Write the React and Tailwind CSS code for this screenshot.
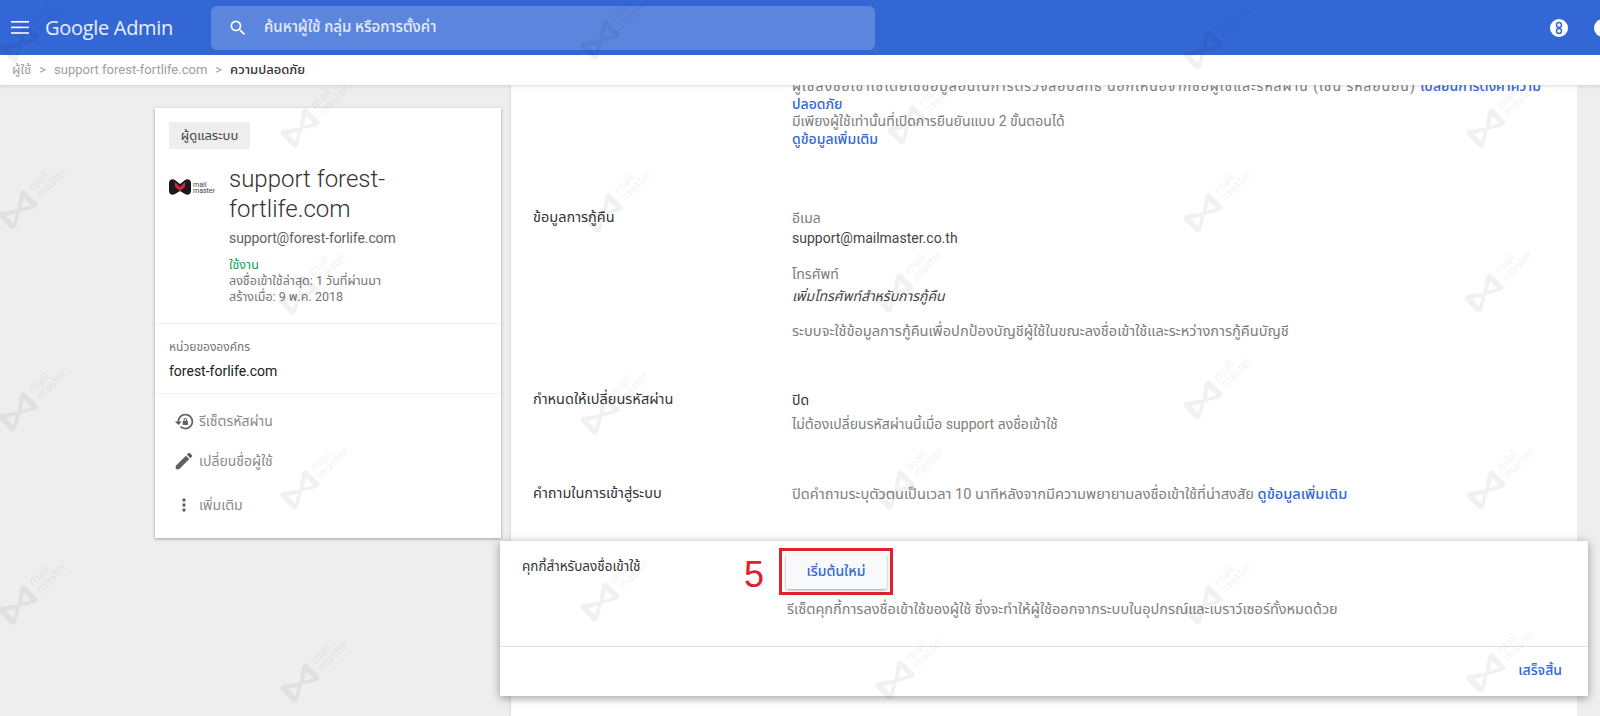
const marks = [
  [20,43],[18,210],[18,412],[18,605],
  [300,128],[298,295],[300,490],[300,683],
  [600,40],[603,213],[600,415],[600,602],
  [907,125],[894,293],[895,490],[895,680],
  [1203,50],[1203,213],[1203,400],[1203,605],
  [1486,128],[1484,293],[1486,490],[1486,673],
];

function Watermark({ x, y }) {
  return (
    <svg className="absolute blur-[0.6px]" style={{ left: x - 60, top: y - 60 }} width="120" height="120" viewBox="-60 -60 120 120">
      <g transform="rotate(-45)" fill="#000" fillOpacity="0.055">
        <path transform="translate(-21 -12.5) scale(0.84)" fillRule="evenodd" d="M3 6C3 2 7 1 10 3L25 14 40 3C43 1 47 2 47 6V24C47 28 43 29 40 27L25 18 10 27C7 29 3 28 3 24ZM10 10V22L20 16ZM40 10 30 16 40 22Z" />
        <text x="24" y="-2" fontFamily="Roboto, sans-serif" fontSize="12">mail</text>
        <text x="24" y="8" fontFamily="Roboto, sans-serif" fontSize="12">master</text>
      </g>
    </svg>
  );
}

function Row({ label, children, className }) {
  return (
    <div className={"grid grid-cols-[259px_1fr] pl-[22px] " + className}>
      <div className="text-[14.5px] leading-[18px] text-[#333]">{label}</div>
      <div className="text-[14px] leading-[18px] text-[#7d7d7d]">{children}</div>
    </div>
  );
}

function Action({ icon, children, className }) {
  return (
    <div className={"flex items-center h-[20px] " + className}>
      <div className="w-[30px] flex justify-center text-[#616161]">{icon}</div>
      <span className="text-[14px] text-[#8a8a8a]">{children}</span>
    </div>
  );
}

export default function App() {
  return (
    <div className="relative h-[716px] w-[1600px] overflow-hidden bg-[#eeeeee] flex flex-col font-['Roboto','Noto_Sans_Thai','Noto_Sans',sans-serif]">
      <header className="h-[55px] shrink-0 bg-[#3367d6] flex items-center pl-[11px] z-20 relative">
        <svg width="18" height="13" viewBox="0 0 18 13" fill="#fff"><rect width="18" height="1.6" /><rect y="5.6" width="18" height="1.6" /><rect y="11.2" width="18" height="1.6" /></svg>
        <span className="ml-[16px] w-[166px] text-[20px] text-white/90 font-['Open_Sans',sans-serif] tracking-[-0.3px]">Google Admin</span>
        <div className="w-[664px] h-[44px] rounded-[6px] bg-[#5c85de] flex items-center pl-[17px]">
          <svg width="20" height="20" viewBox="0 0 24 24" fill="#fff"><path d="M15.5 14h-.79l-.28-.27A6.47 6.47 0 0 0 16 9.5 6.5 6.5 0 1 0 9.5 16c1.61 0 3.09-.59 4.23-1.57l.27.28v.79l5 4.99L20.49 19l-4.99-5zm-6 0C7.01 14 5 11.99 5 9.5S7.01 5 9.5 5 14 7.01 14 9.5 11.99 14 9.5 14z" /></svg>
          <span className="ml-[16px] text-[15px] font-medium text-white/85">ค้นหาผู้ใช้ กลุ่ม หรือการตั้งค่า</span>
        </div>
        <div className="ml-auto flex items-center gap-[26px] -mr-[12px]">
          <svg width="18" height="18" viewBox="0 0 18 18"><circle cx="9" cy="9" r="9" fill="#fff" /><circle cx="9" cy="6" r="2.5" fill="none" stroke="#3367d6" strokeWidth="1.4" /><circle cx="9" cy="12" r="2.5" fill="none" stroke="#3367d6" strokeWidth="1.4" /></svg>
          <div className="w-[18px] h-[18px] rounded-full bg-white" />
        </div>
      </header>

      <nav className="h-[30px] shrink-0 bg-white flex items-center pl-[12px] gap-[8px] text-[13px] text-[#9e9e9e] shadow-[0_1px_4px_rgba(0,0,0,0.14)] z-10 relative">
        <span>ผู้ใช้</span><span>&gt;</span><span>support forest-fortlife.com</span><span>&gt;</span><span className="font-medium text-[#333]">ความปลอดภัย</span>
      </nav>

      <main className="flex-1 min-h-0 flex pl-[155px] pr-[23px] gap-[10px]">
        <aside className="w-[346px] h-[430px] mt-[23px] shrink-0 bg-white shadow-[0_1px_3px_rgba(0,0,0,0.35)] flex flex-col">
          <div className="px-[14px] pt-[14px] h-[216px] border-b border-[#f1f1f1]">
            <div className="w-[81px] h-[27px] bg-[#eeeeee] flex items-center justify-center text-[13px] text-[#444]">ผู้ดูแลระบบ</div>
            <div className="flex mt-[15px]">
              <div className="w-[60px] shrink-0 pt-[14px] flex items-start">
                <svg width="46" height="18" viewBox="0 0 46 18">
                  <path d="M0 5c0-3 3-5 6-3l5 4 5-4c3-2 6 0 6 3v8c0 3-3 5-6 3l-5-3-5 3c-3 2-6 0-6-3z" fill="#1a1a1a" />
                  <path d="M6 4l5 5 5-5v5l-5 4-5-4z" fill="#d3263a" />
                  <text x="24" y="9" fontSize="7" fontFamily="Roboto, sans-serif" fill="#444">mail</text>
                  <text x="24" y="15" fontSize="7" fontFamily="Roboto, sans-serif" fill="#444">master</text>
                </svg>
              </div>
              <div className="min-w-0">
                <div className="text-[24px] leading-[30px] text-[#333] font-light">support forest-<br />fortlife.com</div>
                <div className="mt-[4px] text-[14px] leading-[20px] text-[#616161] tracking-[-0.1px]">support@forest-forlife.com</div>
                <div className="mt-[9px] text-[12.5px] leading-[16px] text-[#0f9d58]">ใช้งาน</div>
                <div className="text-[12.5px] leading-[16px] text-[#757575]">ลงชื่อเข้าใช้ล่าสุด: 1 วันที่ผ่านมา</div>
                <div className="text-[12.5px] leading-[16px] text-[#757575]">สร้างเมื่อ: 9 พ.ค. 2018</div>
              </div>
            </div>
          </div>
          <div className="px-[14px] pt-[14px] h-[70px] border-b border-[#f1f1f1]">
            <div className="text-[12px] leading-[18px] text-[#757575]">หน่วยขององค์กร</div>
            <div className="mt-[5px] text-[14px] leading-[20px] text-[#212121]">forest-forlife.com</div>
          </div>
          <div className="pl-[14px] pt-[17px]">
            <Action icon={<svg width="21" height="21" viewBox="0 0 24 24" fill="currentColor"><path d="M13 3c-4.97 0-9 4.03-9 9H1l4 4 4-4H6c0-3.86 3.14-7 7-7s7 3.14 7 7-3.14 7-7 7c-1.9 0-3.62-.76-4.88-1.99L6.7 18.42C8.32 20.01 10.55 21 13 21c4.97 0 9-4.03 9-9s-4.03-9-9-9zm2 8v-1c0-1.1-.9-2-2-2s-2 .9-2 2v1c-.55 0-1 .45-1 1v3c0 .55.45 1 1 1h4c.55 0 1-.45 1-1v-3c0-.55-.45-1-1-1zm-1 0h-2v-1c0-.55.45-1 1-1s1 .45 1 1v1z" /></svg>}>รีเซ็ตรหัสผ่าน</Action>
            <Action className="mt-[20px]" icon={<svg width="22" height="22" viewBox="0 0 24 24" fill="currentColor"><path d="M3 17.25V21h3.75L17.81 9.94l-3.75-3.75L3 17.25zM20.71 7.04a1 1 0 0 0 0-1.41l-2.34-2.34a1 1 0 0 0-1.41 0l-1.83 1.83 3.75 3.75 1.83-1.83z" /></svg>}>เปลี่ยนชื่อผู้ใช้</Action>
            <Action className="mt-[24px]" icon={<svg width="20" height="20" viewBox="0 0 24 24" fill="currentColor"><path d="M12 8a2 2 0 1 0 0-4 2 2 0 0 0 0 4zm0 2a2 2 0 1 0 0 4 2 2 0 0 0 0-4zm0 6a2 2 0 1 0 0 4 2 2 0 0 0 0-4z" /></svg>}>เพิ่มเติม</Action>
          </div>
        </aside>

        <section className="flex-1 min-w-0 bg-white overflow-hidden shadow-[-1px_0_2px_rgba(0,0,0,0.08)]">
          <div className="-mt-[7px] pl-[259px] ml-[22px] pr-[36px] text-[14px] leading-[17.5px] text-[#7d7d7d]">
            <div className="whitespace-nowrap overflow-hidden tracking-[0.95px]">ผู้ใช้ลงชื่อเข้าใช้โดยใช้ข้อมูลอื่นในการตรวจสอบสิทธิ์ นอกเหนือจากชื่อผู้ใช้และรหัสผ่าน (เช่น รหัสยืนยัน) <span className="text-[#3367d6] font-medium tracking-normal">เปลี่ยนการตั้งค่าความ</span></div>
            <div className="text-[#3367d6] font-medium">ปลอดภัย</div>
            <div>มีเพียงผู้ใช้เท่านั้นที่เปิดการยืนยันแบบ 2 ขั้นตอนได้</div>
            <div className="text-[#3367d6] font-medium">ดูข้อมูลเพิ่มเติม</div>
          </div>
          <Row label="ข้อมูลการกู้คืน" className="mt-[61px]">
            <div>อีเมล</div>
            <div className="mt-[1px] text-[14px] leading-[20px] text-[#444]">support@mailmaster.co.th</div>
            <div className="mt-[17px]">โทรศัพท์</div>
            <div className="mt-[4px] italic text-[#444]">เพิ่มโทรศัพท์สำหรับการกู้คืน</div>
            <div className="mt-[17px] text-[14.6px]">ระบบจะใช้ข้อมูลการกู้คืนเพื่อปกป้องบัญชีผู้ใช้ในขณะลงชื่อเข้าใช้และระหว่างการกู้คืนบัญชี</div>
          </Row>
          <Row label="กำหนดให้เปลี่ยนรหัสผ่าน" className="mt-[51px]">
            <div className="text-[#333]">ปิด</div>
            <div className="mt-[6px]">ไม่ต้องเปลี่ยนรหัสผ่านนี้เมื่อ support ลงชื่อเข้าใช้</div>
          </Row>
          <Row label="คำถามในการเข้าสู่ระบบ" className="mt-[52px]">
            <div className="text-[14.6px]">ปิดคำถามระบุตัวตนเป็นเวลา 10 นาทีหลังจากมีความพยายามลงชื่อเข้าใช้ที่น่าสงสัย <span className="text-[#3367d6] font-medium">ดูข้อมูลเพิ่มเติม</span></div>
          </Row>
        </section>
      </main>

      <div className="absolute left-[500px] top-[541px] w-[1088px] h-[155px] bg-white shadow-[0_2px_9px_rgba(0,0,0,0.38)] z-10 flex flex-col">
        <div className="h-[106px] border-b border-[#e0e0e0] relative pl-[22px] pt-[16px]">
          <div className="text-[13.5px] leading-[18px] text-[#333]">คุกกี้สำหรับลงชื่อเข้าใช้</div>
          <div className="absolute left-[279px] top-[7px] w-[114px] h-[47px] border-[3px] border-[#e0202a] flex items-center justify-center">
            <button className="w-[101px] h-[35px] rounded-[2px] bg-[#f8f9fb] text-[14px] font-medium text-[#3367d6] shadow-[0_1px_3px_rgba(0,0,0,0.4)]">เริ่มต้นใหม่</button>
          </div>
          <span className="absolute left-[244px] top-[13px] text-[36px] leading-[42px] text-[#e0202a] font-['Liberation_Sans',sans-serif]">5</span>
          <div className="absolute left-[287px] top-[60px] text-[14.5px] leading-[18px] text-[#7d7d7d]">รีเซ็ตคุกกี้การลงชื่อเข้าใช้ของผู้ใช้ ซึ่งจะทำให้ผู้ใช้ออกจากระบบในอุปกรณ์และเบราว์เซอร์ทั้งหมดด้วย</div>
        </div>
        <div className="flex-1 flex items-center justify-end pr-[26px] pb-[2px]">
          <span className="text-[14px] font-medium text-[#3367d6]">เสร็จสิ้น</span>
        </div>
      </div>

      <div className="absolute inset-0 z-30 pointer-events-none">
        {marks.map(([x, y]) => <Watermark key={x + "-" + y} x={x} y={y} />)}
      </div>
    </div>
  );
}
